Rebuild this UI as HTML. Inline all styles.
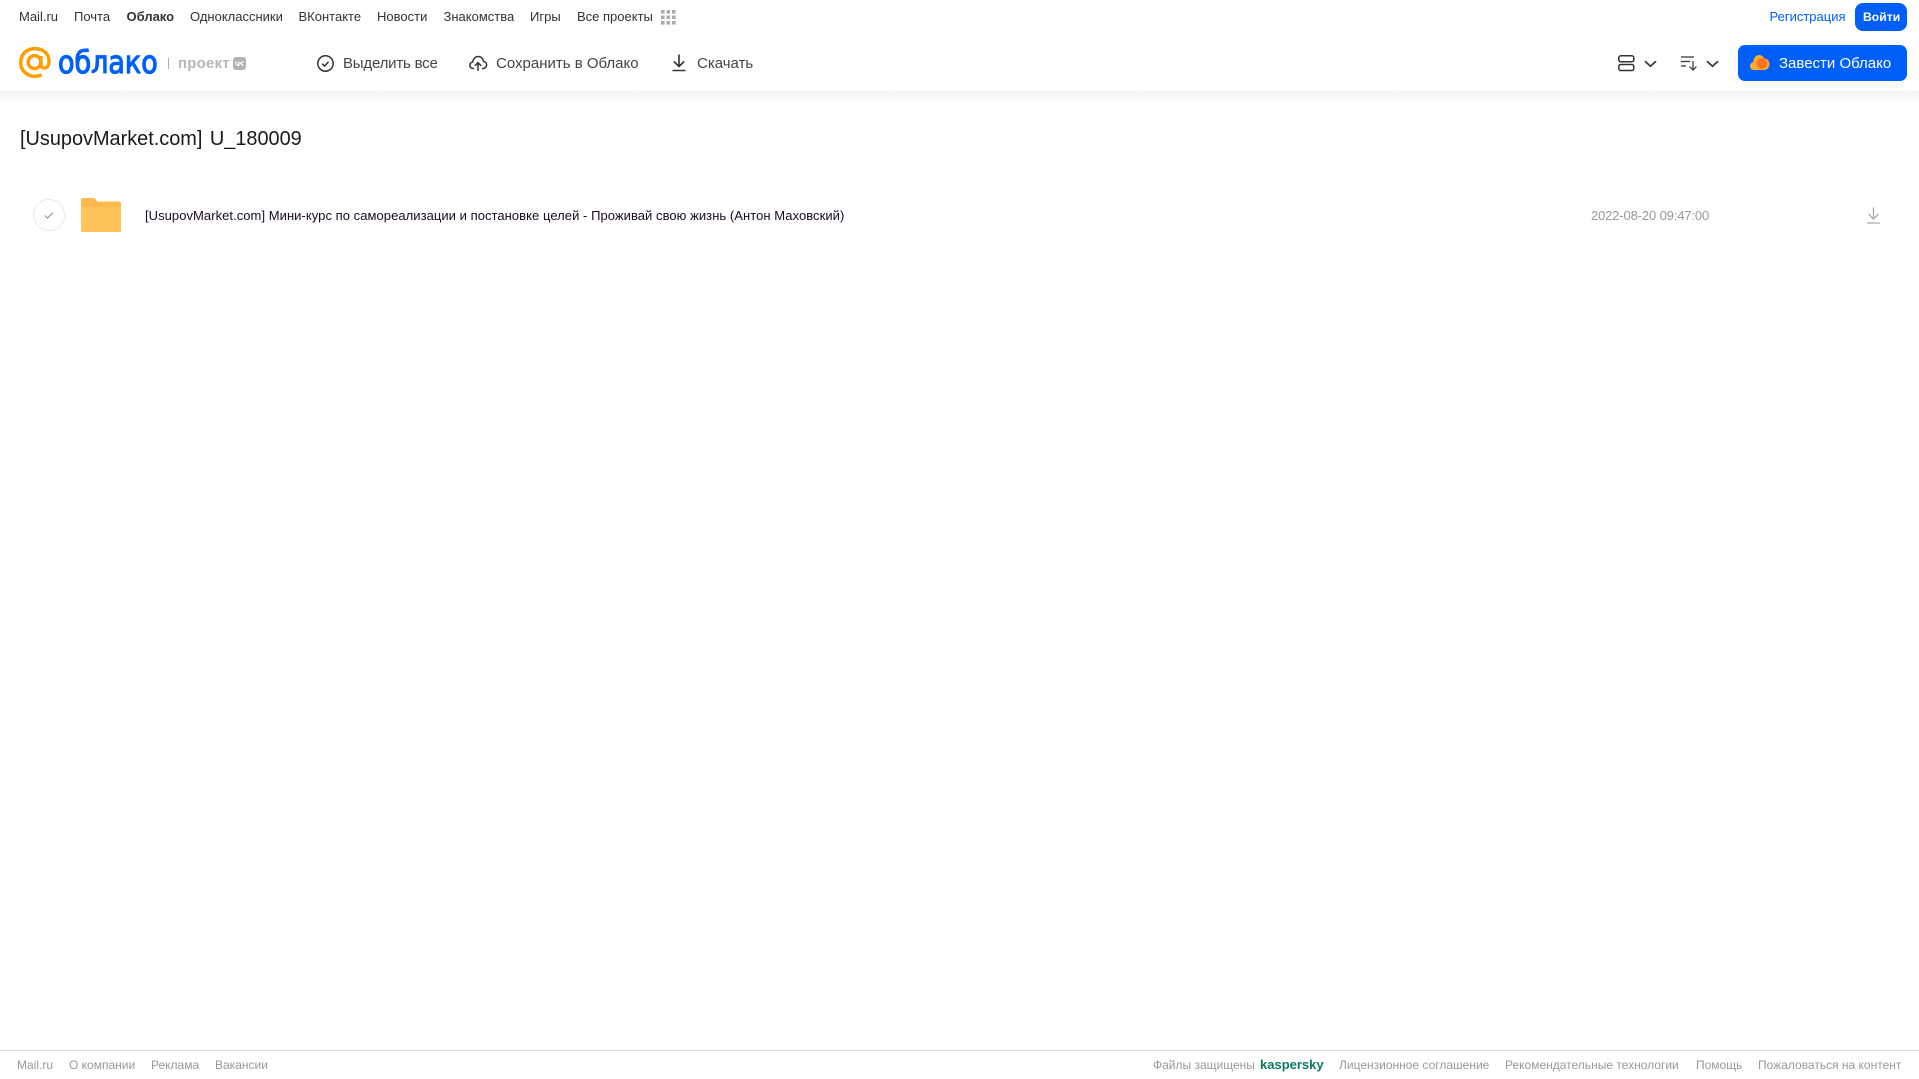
<!DOCTYPE html>
<html lang="ru"><head><meta charset="utf-8"><title>Облако</title>
<style>
html,body{margin:0;padding:0;background:#fff}
body{width:1919px;height:1079px;position:relative;overflow:hidden;font-family:"Liberation Sans",sans-serif}
.t{position:absolute;white-space:nowrap;line-height:20px;height:20px}
.n{top:7px;font-size:13px;color:#333}
.a{top:53.500px;font-size:15px;color:#444}
.f{top:1055px;font-size:12px;color:#999}
svg{position:absolute;overflow:visible}
</style></head><body>
<div style="position:absolute;left:0;top:91px;width:1919px;height:16px;background:linear-gradient(#f5f5f5,#fff)"></div>
<span class="t n" style="left:19px">Mail.ru</span>
<span class="t n" style="left:74px">Почта</span>
<span class="t n" style="left:126.500px;font-weight:bold">Облако</span>
<span class="t n" style="left:190px">Одноклассники</span>
<span class="t n" style="left:298.500px">ВКонтакте</span>
<span class="t n" style="left:377px">Новости</span>
<span class="t n" style="left:443.500px">Знакомства</span>
<span class="t n" style="left:530px">Игры</span>
<span class="t n" style="left:577px">Все проекты</span>
<svg style="left:661px;top:10px" width="15" height="15" fill="#aaa"><rect width="3.6" height="3.6" x="0" y="0"/><rect width="3.6" height="3.6" x="5.5" y="0"/><rect width="3.6" height="3.6" x="11" y="0"/><rect width="3.6" height="3.6" x="0" y="5.5"/><rect width="3.6" height="3.6" x="5.5" y="5.5"/><rect width="3.6" height="3.6" x="11" y="5.5"/><rect width="3.6" height="3.6" x="0" y="11"/><rect width="3.6" height="3.6" x="5.5" y="11"/><rect width="3.6" height="3.6" x="11" y="11"/></svg>
<span class="t n" style="left:1769.500px;color:#005ff9">Регистрация</span>
<div style="position:absolute;left:1855px;top:3px;width:52px;height:28px;border-radius:8px;background:#005ff9"></div>
<span class="t n" style="left:1863px;color:#fff;font-weight:bold;font-size:12.200px">Войти</span>

<svg style="left:19px;top:47px" width="33" height="32" viewBox="0 0 35 34" fill="none" stroke="#ff9e00" stroke-width="3.700"><circle cx="16.500" cy="16" r="6.800"/><path d="M23.300 9.500v9.500c0 4.600 7.600 4.600 8.400-1.500 1.400-9-5-15.800-15-15.800C8 1.700 1.800 8 1.800 16.300c0 8.700 6.700 14.900 15 14.900 2.700 0 5-.6 7.200-1.700"/></svg>
<span class="t" style="left:57.500px;top:46px;height:34px;line-height:34px;font-size:31px;color:#005ff9;-webkit-text-stroke:1.200px #005ff9;font-family:'DejaVu Sans',sans-serif;transform-origin:left center;transform:scaleX(.87)">облако</span>
<div style="position:absolute;left:168px;top:58px;width:1px;height:11px;background:#aaa"></div>
<span class="t" style="left:178px;top:53.500px;font-size:15px;font-weight:bold;color:#b8b8b8;letter-spacing:.2px">проект</span>
<div style="position:absolute;left:233px;top:57px;width:13px;height:13px;border-radius:3px;background:#b3b3b3"></div>
<svg style="left:233px;top:57px" width="13" height="13" fill="none" stroke="#fff" stroke-width="1.300"><path d="M2.500 4.500c.4 2.500 1.500 4 3.300 4V4.500M10.500 4.500 7.500 6.500l3 2.200"/></svg>

<svg style="left:316.500px;top:54.500px" width="17" height="17" fill="none" stroke="#333" stroke-width="1.500"><circle cx="8.500" cy="8.500" r="7.700"/><path d="M5.200 8.700l2.400 2.300 4-4.300"/></svg>
<span class="t a" style="left:343px;letter-spacing:-.2px">Выделить все</span>
<svg style="left:469px;top:54px" width="18" height="18" fill="none" stroke="#333" stroke-width="1.500"><path d="M5 14.500H4C2 14.500 .8 13 .8 11.300c0-1.700 1.200-3 2.800-3.200C4 5 6.300 2.500 9.200 2.500c2.900 0 5 2.200 5.400 5 1.800.2 3 1.700 3 3.400 0 1.800-1.300 3.600-3.300 3.600H13"/><path d="M9 17V9M5.800 11.800 9 8.700l3.200 3.100"/></svg>
<span class="t a" style="left:496px">Сохранить в Облако</span>
<svg style="left:672px;top:54px" width="14" height="18" fill="none" stroke="#333" stroke-width="1.600"><path d="M7 .5v11.500M1.800 7.500 7 12.500l5.200-5M.5 16.500h13"/></svg>
<span class="t a" style="left:697px">Скачать</span>

<svg style="left:1618px;top:55px" width="17" height="17" fill="none" stroke="#333" stroke-width="1.500"><rect x=".8" y=".8" width="15" height="6" rx="2"/><rect x=".8" y="9.500" width="15" height="6" rx="2"/></svg>
<svg style="left:1644px;top:60px" width="13" height="8" fill="none" stroke="#333" stroke-width="1.700"><path d="M1 1.200l5.500 5 5.500-5"/></svg>
<svg style="left:1681px;top:56px" width="17" height="15" fill="none" stroke="#333" stroke-width="1.200"><path d="M0 1h13M0 5.500h9M0 10h5M12 5v8.500M8.500 10.500l3.500 3.500 3.500-3.500"/></svg>
<svg style="left:1706px;top:60px" width="13" height="8" fill="none" stroke="#333" stroke-width="1.700"><path d="M1 1.200l5.500 5 5.500-5"/></svg>
<div style="position:absolute;left:1738px;top:45px;width:169px;height:36px;border-radius:7px;background:#005ff9"></div>
<svg style="left:1750px;top:54px" width="20" height="18"><path d="M4 16C1.500 16 0 14.200 0 12c0-2 1.300-3.500 3-3.800C3.500 4 6 1 9 1c2.500 0 4.500 1.500 5.200 3.500C17.500 4.500 19.500 7 19.500 10.300c0 3.200-2.300 5.700-5.500 5.700z" fill="#ffa930"/><circle cx="12" cy="9.500" r="5.300" fill="#ff6a1a" opacity=".85"/></svg>
<span class="t a" style="left:1779px;color:#fff">Завести Облако</span>

<span class="t" style="left:20px;top:127px;height:24px;line-height:24px;font-size:19.900px;word-spacing:2px;color:#1a1a1a">[UsupovMarket.com] U_180009</span>

<div style="position:absolute;left:33px;top:199px;width:30px;height:30px;border:1px solid #eaeaea;border-radius:50%"></div>
<svg style="left:44px;top:211px" width="10" height="9" fill="none" stroke="#999" stroke-width="1.200"><path d="M.8 4.500l2.700 2.700L9 1.500"/></svg>
<svg style="left:81px;top:198px" width="40" height="34"><path d="M2 0h10c2 0 3 1 4 3.500H38a2 2 0 0 1 2 2V32a2 2 0 0 1-2 2H2a2 2 0 0 1-2-2V2a2 2 0 0 1 2-2z" fill="#fdb94c"/><path d="M0 9h40v23a2 2 0 0 1-2 2H2a2 2 0 0 1-2-2z" fill="#ffc35a"/></svg>
<span class="t" style="left:145px;top:206px;font-size:13px;letter-spacing:.05px;color:#1b0a24">[UsupovMarket.com] Мини-курс по самореализации и постановке целей - Проживай свою жизнь (Антон Маховский)</span>
<span class="t" style="left:1591px;top:206px;font-size:13px;letter-spacing:-.14px;color:#999">2022-08-20 09:47:00</span>
<svg style="left:1867px;top:207px" width="13" height="17" fill="none" stroke="#aaa" stroke-width="1.300"><path d="M6.500 .5v11M1.500 7l5 5 5-5M0 16h13"/></svg>

<div style="position:absolute;left:0;top:1050px;width:1919px;height:1px;background:#ddd"></div>
<span class="t f" style="left:17px">Mail.ru</span>
<span class="t f" style="left:69px">О компании</span>
<span class="t f" style="left:151px">Реклама</span>
<span class="t f" style="left:215px">Вакансии</span>
<span class="t f" style="left:1153px">Файлы защищены</span>
<span class="t f" style="left:1260px;color:#0b7a64;font-weight:bold;font-size:13px">kaspersky</span>
<span class="t f" style="left:1339px">Лицензионное соглашение</span>
<span class="t f" style="left:1505px">Рекомендательные технологии</span>
<span class="t f" style="left:1696px">Помощь</span>
<span class="t f" style="left:1758px">Пожаловаться на контент</span>
</body></html>
